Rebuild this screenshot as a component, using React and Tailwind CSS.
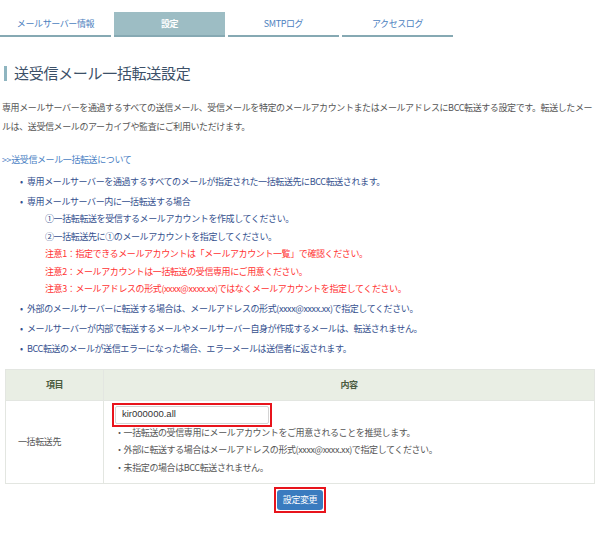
import React from "react";

const tabs = [
  { label: "メールサーバー情報", active: false },
  { label: "設定", active: true },
  { label: "SMTPログ", active: false },
  { label: "アクセスログ", active: false },
];

export default function App() {
  return (
    <div className="w-[600px] h-[535px] bg-white overflow-hidden font-['Noto_Sans_CJK_JP','Noto_Sans',sans-serif] text-[9px] tracking-[-0.4px]">
      {/* Tabs */}
      <div className="flex gap-[3px] pt-[12px]">
        {tabs.map((t) => (
          <div
            key={t.label}
            className={
              t.active
                ? "w-[111px] h-[25px] flex items-center justify-center bg-[#9dbdc4] border-b-2 border-[#86a9b3] text-white font-bold"
                : "w-[111px] h-[25px] flex items-center justify-center border-b-2 border-[#86a9b3] text-[#4d7fc0]"
            }
          >
            {t.label}
          </div>
        ))}
      </div>

      {/* Title */}
      <div className="mt-[28px] ml-[4px] flex items-center h-[16px]">
        <div className="w-[3px] h-[15px] bg-[#8fb5c0]" />
        <div className="ml-[7px] text-[15px] leading-[16px] text-[#3c5068] tracking-[-0.3px]">
          送受信メール一括転送設定
        </div>
      </div>

      {/* Description */}
      <p className="mt-[16.5px] pl-[2px] pr-[2px] leading-[19px] text-[#555]">
        専用メールサーバーを通過するすべての送信メール、受信メールを特定のメールアカウントまたはメールアドレスにBCC転送する設定です。転送したメールは、送受信メールのアーカイブや監査にご利用いただけます。
      </p>

      {/* Link */}
      <div className="mt-[14px] pl-[2px] leading-[19px] text-[#4a7fc4]">
        &gt;&gt;送受信メール一括転送について
      </div>

      {/* Bullets */}
      <ul className="mt-[4px] pl-[20px] leading-[17.5px] text-[#34508e] flex flex-col gap-[2.5px]">
        <li className="flex">
          <span className="w-[7px] shrink-0">•</span>
          <span>専用メールサーバーを通過するすべてのメールが指定された一括転送先にBCC転送されます。</span>
        </li>
        <li className="flex">
          <span className="w-[7px] shrink-0">•</span>
          <div>
            <div>専用メールサーバー内に一括転送する場合</div>
            <div className="pl-[18px]">①一括転転送を受信するメールアカウントを作成してください。</div>
            <div className="pl-[18px]">②一括転送先に①のメールアカウントを指定してください。</div>
            <div className="pl-[18px] text-[#ff3333]">注意1：指定できるメールアカウントは「メールアカウント一覧」で確認ください。</div>
            <div className="pl-[18px] text-[#ff3333]">注意2：メールアカウントは一括転送の受信専用にご用意ください。</div>
            <div className="pl-[18px] text-[#ff3333]">注意3：メールアドレスの形式(xxxx@xxxx.xx)ではなくメールアカウントを指定してください。</div>
          </div>
        </li>
        <li className="flex">
          <span className="w-[7px] shrink-0">•</span>
          <span>外部のメールサーバーに転送する場合は、メールアドレスの形式(xxxx@xxxx.xx)で指定してください。</span>
        </li>
        <li className="flex">
          <span className="w-[7px] shrink-0">•</span>
          <span>メールサーバーが内部で転送するメールやメールサーバー自身が作成するメールは、転送されません。</span>
        </li>
        <li className="flex">
          <span className="w-[7px] shrink-0">•</span>
          <span>BCC転送のメールが送信エラーになった場合、エラーメールは送信者に返されます。</span>
        </li>
      </ul>

      {/* Table */}
      <div className="mt-[11px] mx-[5px] border border-[#e3e6e1]">
        <div className="flex h-[30px] bg-[#e9eee4] font-bold text-[#4b5a3f]">
          <div className="w-[98px] flex items-center justify-center border-r border-[#e3e6e1]">項目</div>
          <div className="flex-1 flex items-center justify-center">内容</div>
        </div>
        <div className="flex h-[83px] border-t border-[#e3e6e1]">
          <div className="w-[98px] flex items-center pl-[12px] border-r border-[#e3e6e1] text-[#555]">一括転送先</div>
          <div className="flex-1 pl-[11px] pt-[5px]">
            <div className="relative w-[154px] h-[18px]">
              <div className="w-full h-full border border-[#d4d4d4] rounded-[2px] flex items-center pl-[6px] text-[#333] text-[9.5px] tracking-normal font-['Liberation_Sans','Noto_Sans_CJK_JP',sans-serif]">
                kir000000.all
              </div>
              <div className="absolute -inset-[3px] border-2 border-[#e8141c] pointer-events-none" />
            </div>
            <div className="leading-[17.5px] text-[#555] mt-[0px]">
              <div>・一括転送の受信専用にメールアカウントをご用意されることを推奨します。</div>
              <div>・外部に転送する場合はメールアドレスの形式(xxxx@xxxx.xx)で指定してください。</div>
              <div>・未指定の場合はBCC転送されません。</div>
            </div>
          </div>
        </div>
      </div>

      {/* Button */}
      <div className="flex justify-center mt-[6px]">
        <div className="relative">
          <button className="w-[46px] h-[20px] rounded-[3px] bg-[#3a7bbf] text-white text-[9px] flex items-center justify-center">
            設定変更
          </button>
          <div className="absolute -inset-[3px] border-2 border-[#e8141c] pointer-events-none" />
        </div>
      </div>
    </div>
  );
}
